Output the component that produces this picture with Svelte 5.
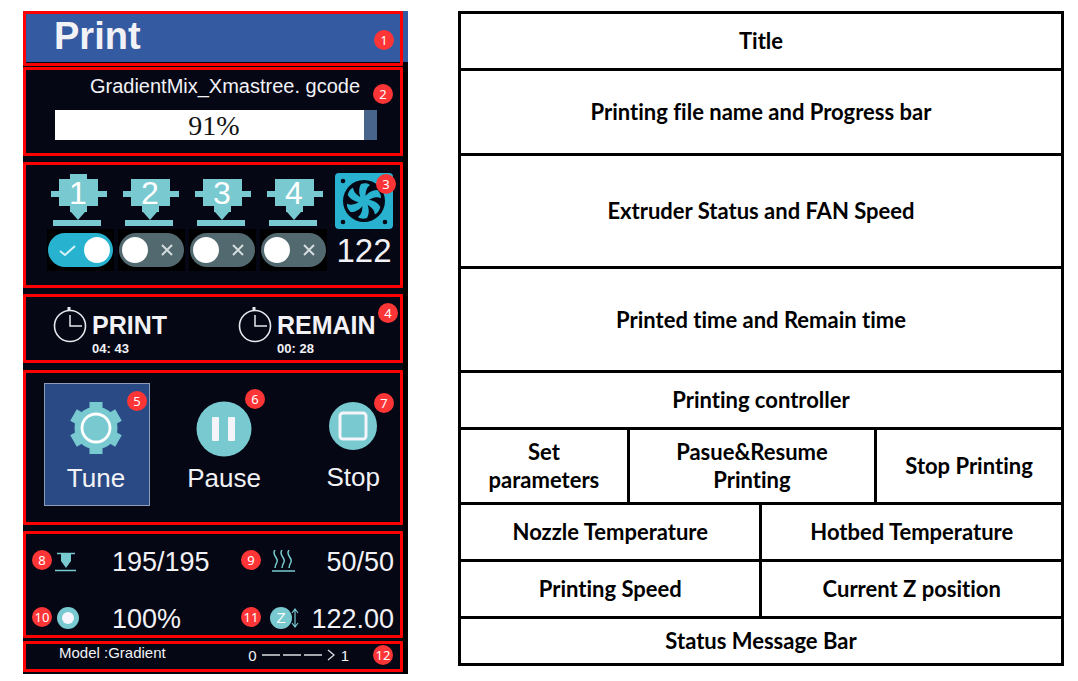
<script>
  const extruders = $state([
    { id: 1, on: true },
    { id: 2, on: false },
    { id: 3, on: false },
    { id: 4, on: false }
  ]);
  const progress = 91;
  const fill = 96;
  const blades = [0, 60, 120, 180, 240, 300];
  const times = [
    { label: 'PRINT', value: '04: 43' },
    { label: 'REMAIN', value: '00: 28' }
  ];
</script>

{#snippet badge(n)}
  <span class="badge">{n}</span>
{/snippet}

<main class="page">
  <section class="device" aria-label="Printer screen">
    <header class="title-bar">
      <div class="frame title">
        <h1>Print</h1>
        <span class="pin pin-title">{@render badge(1)}</span>
      </div>
    </header>

    <div class="frame job">
      <p class="file">GradientMix_Xmastree. gcode</p>
      <div class="bar" role="progressbar" aria-label="Progress" aria-valuenow={progress} aria-valuemin="0" aria-valuemax="100">
        <div class="bar-fill" style="width: {fill}%"></div>
        <span class="bar-text">{progress}%</span>
      </div>
      <span class="pin pin-job">{@render badge(2)}</span>
    </div>

    <div class="frame heads">
      <div class="extruders">
        <div class="nozzles">
          {#each extruders as e (e.id)}
            <svg class="nozzle" width="56" height="54" viewBox="0 0 56 54">
              <g fill="#78c9d0">
                {#if e.on}<path d="M19 1h17v6H19z" />{/if}
                <path d="M8 6h39v12h9v6h-9v9H36v6h-2l-7 8-7-8h-1v-6H8v-9H0v-6h8z" />
                <path d="M2 47h48v6H2z" />
              </g>
              <text x="27" y="31" text-anchor="middle">{e.id}</text>
            </svg>
          {/each}
        </div>
        <div class="switches">
          {#each extruders as e (e.id)}
            <label class="tile">
              <input type="checkbox" role="switch" aria-label="Extruder {e.id}" bind:checked={e.on} />
              <svg width="65" height="34" viewBox="0 0 65 34">
                {#if e.on}
                  <circle cx="49" cy="17" r="13" fill="#fff" />
                  <path d="M12 18l5 4 10-9" fill="none" stroke="#d5f2f7" stroke-width="2" />
                {:else}
                  <circle cx="16" cy="17" r="13" fill="#fff" />
                  <path d="M43 12l10 10M53 12l-10 10" fill="none" stroke="#d4dcde" stroke-width="2" />
                {/if}
              </svg>
            </label>
          {/each}
        </div>
      </div>
      <div class="fan">
        <svg width="58" height="56" viewBox="0 0 58 56">
          <rect width="58" height="56" rx="4" fill="#28b2cf" />
          <g fill="#050714">
            <circle cx="8" cy="8" r="2.3" />
            <circle cx="50" cy="8" r="2.3" />
            <circle cx="8" cy="49" r="2.3" />
            <circle cx="50" cy="49" r="2.3" />
            <circle cx="29" cy="28" r="21" />
          </g>
          <g transform="translate(29 28)" fill="#28b2cf">
            <circle r="3.5" />
            {#each blades as a}
              <path transform="rotate({a})" d="M-2 0C-5 -6 -6 -12 -3 -17C0 -18 4 -18 6 -16C2 -13 1 -8 2 -2Z" />
            {/each}
          </g>
        </svg>
        <span class="fan-speed">122</span>
      </div>
      <span class="pin pin-heads">{@render badge(3)}</span>
    </div>

    <div class="frame times">
      {#each times as t}
        <div class="time">
          <svg width="34" height="38" viewBox="0 0 34 38" fill="none" stroke="#e8e8ee">
            <circle cx="17" cy="21" r="15.5" stroke-width="1.6" />
            <path d="M17 10v11h12" stroke-width="1.5" />
            <path d="M16 2v4" stroke-width="3" />
          </svg>
          <div>
            <h2>{t.label}</h2>
            <p>{t.value}</p>
          </div>
        </div>
      {/each}
      <span class="pin pin-times">{@render badge(4)}</span>
    </div>

    <div class="frame controls">
      <button type="button" class="tune">
        <svg width="54" height="54" viewBox="-27 -27 54 54">
          <g fill="#78c9d0">
            <circle r="21.5" />
            {#each blades as a}
              <path transform="rotate({a})" d="M-6.5 -26h13v7h-13z" />
            {/each}
          </g>
          <circle r="14" fill="none" stroke="#fff" stroke-width="2.8" />
        </svg>
        <span>Tune</span>
        <span class="pin pin-tune">{@render badge(5)}</span>
      </button>
      <button type="button" class="pause">
        <svg width="56" height="56" viewBox="0 0 56 56">
          <circle cx="28" cy="28" r="27.5" fill="#78c9d0" />
          <rect x="16" y="16" width="7" height="24" rx="1" fill="#f4f4fa" />
          <rect x="32" y="16" width="7" height="24" rx="1" fill="#f4f4fa" />
        </svg>
        <span>Pause</span>
        <span class="pin pin-pause">{@render badge(6)}</span>
      </button>
      <button type="button" class="stop">
        <svg width="48" height="48" viewBox="0 0 48 48">
          <circle cx="24" cy="24" r="24" fill="#78c9d0" />
          <rect x="11" y="11" width="26" height="26" rx="3" fill="none" stroke="#f4f4fa" stroke-width="3" />
        </svg>
        <span>Stop</span>
        <span class="pin pin-stop">{@render badge(7)}</span>
      </button>
    </div>

    <div class="frame metrics">
      <div class="metric">
        {@render badge(8)}
        <svg width="22" height="20" viewBox="0 0 22 20">
          <path d="M2 1.5h18M0 18.5h21" stroke="#78c9d0" stroke-width="1.6" />
          <path d="M6 1h10v8l-5 7-5-7z" fill="#78c9d0" />
        </svg>
        <span class="value">195/195</span>
      </div>
      <div class="metric right">
        {@render badge(9)}
        <svg width="26" height="24" viewBox="-2 1 26 24" fill="none" stroke="#78c9d0" stroke-width="1.5">
          <path d="M3 1c-4 5 4 8 2 12-1 2-2 4-2 6M10 1c-4 5 4 8 2 12-1 2-2 4-2 6M17 1c-4 5 4 8 2 12-1 2-2 4-2 6M0 22h23" />
        </svg>
        <span class="value">50/50</span>
      </div>
      <div class="metric">
        {@render badge(10)}
        <svg width="24" height="24" viewBox="0 0 24 24">
          <circle cx="13" cy="11" r="11" fill="#78c9d0" />
          <circle cx="13" cy="11" r="6" fill="#f6f6fc" />
        </svg>
        <span class="value">100%</span>
      </div>
      <div class="metric right">
        {@render badge(11)}
        <svg width="30" height="24" viewBox="0 0 30 24">
          <circle cx="11" cy="11" r="11" fill="#78c9d0" />
          <text class="z" x="11" y="16" text-anchor="middle">Z</text>
          <path d="M25 3v16M22 6l3-4 3 4M22 16l3 4 3-4" fill="none" stroke="#78c9d0" stroke-width="1.2" />
        </svg>
        <span class="value">122.00</span>
      </div>
    </div>

    <div class="frame status">
      <span class="model">Model :Gradient</span>
      <span class="range">
        <span>0</span>
        <svg width="76" height="12" viewBox="0 0 76 12" fill="none" stroke="#dcdce2" stroke-width="1.3">
          <path d="M1 6h18M22 6h18M43 6h18M67 1l6 5-6 5" />
        </svg>
        <span>1</span>
      </span>
      <span class="pin pin-status">{@render badge(12)}</span>
    </div>
  </section>

  <table class="legend">
    <colgroup>
      <col style="width: 28%" /><col style="width: 22%" /><col style="width: 19%" /><col style="width: 31%" />
    </colgroup>
    <tbody>
      <tr class="h57"><td colspan="4">Title</td></tr>
      <tr class="h85"><td colspan="4">Printing file name and Progress bar</td></tr>
      <tr class="h113"><td colspan="4">Extruder Status and FAN Speed</td></tr>
      <tr class="h104"><td colspan="4">Printed time and Remain time</td></tr>
      <tr class="h57"><td colspan="4">Printing controller</td></tr>
      <tr class="h75">
        <td>Set<br />parameters</td>
        <td colspan="2">Pasue&amp;Resume<br />Printing</td>
        <td>Stop Printing</td>
      </tr>
      <tr class="h57"><td colspan="2">Nozzle Temperature</td><td colspan="2">Hotbed Temperature</td></tr>
      <tr class="h57"><td colspan="2">Printing Speed</td><td colspan="2">Current Z position</td></tr>
      <tr class="h47"><td colspan="4">Status Message Bar</td></tr>
    </tbody>
  </table>
</main>

<style>
  :global(body) {
    margin: 0;
    background: #fff;
  }

  .page {
    display: grid;
    grid-template-columns: 385fr 606fr;
    gap: 50px;
    align-items: start;
    padding: 11px 14px 7px 23px;
    font-family: "Liberation Sans", Arial, sans-serif;
  }

  h1, h2, p {
    margin: 0;
  }

  svg {
    display: block;
    flex: none;
  }

  .device {
    padding-bottom: 2px;
    background: linear-gradient(to left, #000 5px, #050714 5px);
    color: #f2f2f6;
  }

  .frame {
    position: relative;
    box-sizing: border-box;
    margin-right: 5px;
    border: 3px solid #f00;
    border-radius: 1px;
  }

  .badge {
    display: block;
    flex: none;
    width: 20px;
    height: 20px;
    border-radius: 50%;
    background: #fd3536;
    color: #fff;
    font: 13px/20px "Noto Sans", sans-serif;
    text-align: center;
  }

  .pin {
    position: absolute;
  }

  .pin-title { top: 16px; right: 6px; }
  .pin-job { top: 14px; right: 7px; }
  .pin-heads { top: 9px; right: 4px; }
  .pin-times { top: 6px; right: 2px; }
  .pin-tune { top: 7px; right: 2px; }
  .pin-pause { top: -12px; right: -4px; }
  .pin-stop { top: -9px; right: -14px; }
  .pin-status { top: 1px; right: 7px; }

  .title-bar {
    background: linear-gradient(#345aa2 51px, transparent 51px);
  }

  .title {
    padding: 0 28px 5px;
  }

  h1 {
    font-size: 38px;
    line-height: 44px;
  }

  .job {
    margin-top: 1px;
    padding: 4px 23px 13px 29px;
  }

  .file {
    font-size: 20px;
    line-height: 24px;
    padding-bottom: 12px;
    padding-left: 18px;
    text-align: center;
  }

  .bar {
    position: relative;
    height: 30px;
    background: #49648b;
  }

  .bar-fill {
    height: 100%;
    background: #fff;
  }

  .bar-text {
    position: absolute;
    inset: 0;
    padding-right: 4px;
    color: #111;
    font: 28px/32px "Liberation Serif", serif;
    text-align: center;
  }

  .heads {
    display: flex;
    justify-content: space-between;
    margin-top: 6px;
    padding: 8px 7px 14px 21px;
  }

  .nozzles {
    display: flex;
    gap: 16px;
    padding-left: 4px;
  }

  .nozzle text {
    fill: #fff;
    font-size: 32px;
  }

  .switches {
    display: flex;
    gap: 4px;
    padding-top: 2px;
  }

  .tile {
    position: relative;
    display: block;
    padding: 4px 1px;
    background: #000;
  }

  .tile input {
    display: block;
    appearance: none;
    width: 65px;
    height: 34px;
    margin: 0;
    border-radius: 17px;
    background: #52696f;
  }

  .tile input:checked {
    background: #27b3cf;
  }

  .tile svg {
    position: absolute;
    top: 4px;
    left: 1px;
    pointer-events: none;
  }

  .fan-speed {
    display: block;
    padding-top: 3px;
    font-size: 33px;
    line-height: 38px;
    text-align: center;
  }

  .times {
    display: grid;
    grid-template-columns: 185fr 162fr;
    margin-top: 6px;
    padding: 8px 0 4px 27px;
  }

  .time {
    display: flex;
    gap: 5px;
  }

  h2 {
    padding-top: 4px;
    font-size: 25px;
    line-height: 32px;
  }

  .time p {
    font-size: 13px;
    font-weight: bold;
    line-height: 15px;
  }

  .controls {
    display: grid;
    grid-template-columns: 106fr 148fr 82fr;
    align-items: start;
    margin-top: 7px;
    padding: 10px 20px 16px 18px;
  }

  button {
    position: relative;
    display: flex;
    flex-direction: column;
    align-items: center;
    box-sizing: border-box;
    padding: 0;
    border: 0;
    background: none;
    color: inherit;
    font-family: inherit;
    font-size: 26px;
    line-height: 30px;
  }

  .tune {
    padding: 17px 2px 12px 0;
    border: 1px solid #8d9cb8;
    background: #2a4a85;
  }

  .tune svg {
    margin-bottom: 8px;
  }

  .pause {
    justify-self: center;
    margin-top: 18px;
  }

  .pause svg {
    margin-bottom: 6px;
  }

  .stop {
    justify-self: end;
    margin-top: 19px;
  }

  .stop svg {
    margin-bottom: 12px;
  }

  .metrics {
    display: grid;
    grid-template-columns: 209fr 153fr;
    row-gap: 25px;
    margin-top: 6px;
    padding: 12px 6px 0;
  }

  .metric {
    display: grid;
    grid-template-columns: 20px 24px 1fr;
    align-items: center;
    column-gap: 3px;
  }

  .metric.right {
    grid-template-columns: 20px 30px 1fr;
    column-gap: 9px;
  }

  .metric .badge {
    margin-bottom: 4px;
  }

  .value {
    padding-left: 30px;
    font-size: 27px;
    line-height: 32px;
  }

  .right .value {
    padding-left: 0;
    justify-self: end;
  }

  .z {
    fill: #fff;
    font-size: 15px;
  }

  .status {
    display: flex;
    justify-content: space-between;
    margin-top: 3px;
    padding: 0 51px 3px 33px;
    font-size: 15px;
    line-height: 18px;
  }

  .range {
    display: flex;
    gap: 4px;
    padding-top: 2px;
    line-height: 20px;
  }

  .range svg {
    margin-top: 3px;
  }

  .legend {
    width: 100%;
    border-collapse: collapse;
    table-layout: fixed;
    color: #000;
    font: bold 22px/28px Lato, "Open Sans", sans-serif;
    font-variant-ligatures: none;
    text-align: center;
  }

  .legend td {
    padding: 0;
    border: 3px solid #000;
  }

  .h47 { height: 47px; }
  .h57 { height: 57px; }
  .h75 { height: 75px; }
  .h85 { height: 85px; }
  .h104 { height: 104px; }
  .h113 { height: 113px; }
</style>
